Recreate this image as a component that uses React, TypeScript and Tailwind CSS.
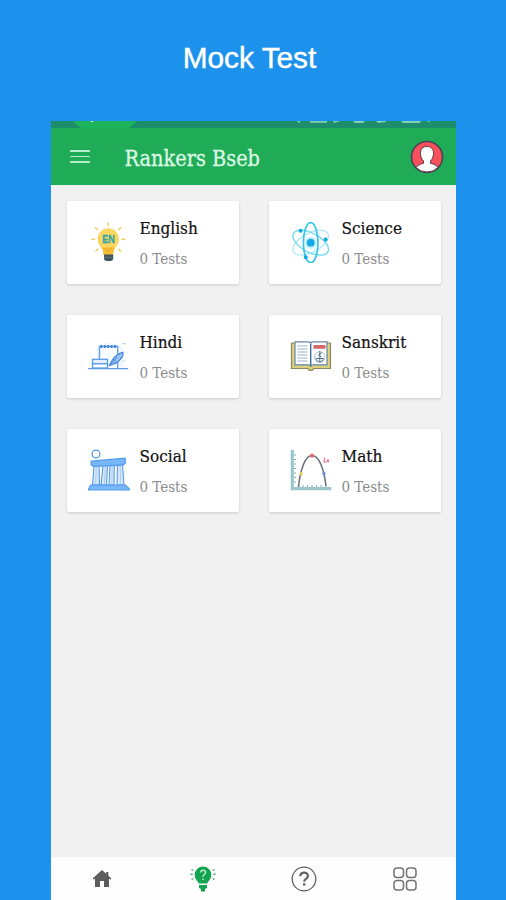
import type { ReactNode } from 'react';

const EnglishIcon = () => (
  <svg width="42" height="42" viewBox="0 0 42 42" fill="none">
    <g stroke="#f0cf68" strokeWidth="1.5" strokeLinecap="round">
      <path d="M20.3 2v2.4M7.5 6.5l2.2 2.2M33 6.5l-2.2 2.2M4 18.3h2.6M34 18.3h2.8M7.8 30l2.2-1.8M32.8 30l-2.2-1.8" />
    </g>
    <path d="M20.3 7.3a10.6 10.6 0 0 0-10.6 10.8c0 5 2.6 7.4 4.6 10.4.9 1.4 1 2.5 1.2 5.5h9.6c.2-3 .3-4.1 1.2-5.5 2-3 4.6-5.4 4.6-10.4A10.6 10.6 0 0 0 20.3 7.3z" fill="#fbd55e" />
    <path d="M13.5 26.5h13.6c-1.6 2.2-1.9 4-2 7.5h-9.6c-.1-3.5-.4-5.3-2-7.5z" fill="#f7bf38" />
    <path d="M17 27l3.3 3 3.3-3" stroke="#e59b24" strokeWidth="1" />
    <path d="M16 33.5h9.2v4.1a2.5 2.5 0 0 1-2.5 2.4h-4.2a2.5 2.5 0 0 1-2.5-2.4z" fill="#3c5360" />
    <path d="M16 36.3h9.2" stroke="#78858b" strokeWidth=".7" />
    <text x="20.4" y="22" textAnchor="middle" fontSize="10" fontWeight="700" fill="#2fa4a8" stroke="#2fa4a8" strokeWidth=".3" fontFamily="Liberation Sans, sans-serif" textLength="12.5" lengthAdjust="spacingAndGlyphs">EN</text>
  </svg>
);

const ScienceIcon = () => (
  <svg width="42" height="42" viewBox="0 0 42 42" fill="none">
    <ellipse cx="20.7" cy="21.7" rx="19.5" ry="9.5" transform="rotate(-28 20.7 21.7)" stroke="#b5eafa" strokeWidth="1.4" />
    <ellipse cx="20.7" cy="21.7" rx="19.5" ry="9.5" transform="rotate(28 20.7 21.7)" stroke="#7bdaf2" strokeWidth="1.5" />
    <ellipse cx="20.7" cy="21.7" rx="7.3" ry="20" stroke="#35c4ec" strokeWidth="1.7" />
    <circle cx="20.7" cy="21.7" r="6" fill="#c6f0fc" />
    <circle cx="20.7" cy="21.7" r="3.9" fill="#16a9ea" />
    <circle cx="10.6" cy="9.7" r="2" fill="#16a9e0" />
    <circle cx="35.6" cy="18.4" r="2" fill="#16a9e0" />
    <circle cx="15.7" cy="36.2" r="2" fill="#16a9e0" />
  </svg>
);

const HindiIcon = () => (
  <svg width="42" height="42" viewBox="0 0 42 42" fill="none" stroke="#5b9be8" strokeLinecap="round">
    <path d="M8 12c4-4 18-5 24-2s5 15 2 22H10z" fill="#f3f7fe" stroke="none" />
    <path d="M11.5 24V11.5h18.2V33" fill="#f8fbff" strokeWidth="1.3" />
    <path d="M12.5 11.5h16.5" strokeWidth="3" strokeDasharray="1.8 1.6" strokeLinecap="butt" stroke="#3e83d8" />
    <rect x="4.5" y="24.3" width="15" height="4.5" fill="#e3effd" strokeWidth="1.3" />
    <rect x="4.5" y="28.8" width="15" height="4.2" fill="#fff" strokeWidth="1.3" />
    <path d="M.7 33.6h39" strokeWidth="1.4" />
    <path d="M21.5 30.3l3-5.5c2.5-3.5 6-6.5 10.5-7.5.5 4-2.5 7.5-6 10.3z" fill="#9ec4f2" strokeWidth="1.2" stroke="#4187dc" />
    <path d="M21.5 30.3l7.5-8M25.5 24.5l2.7 3" strokeWidth="1" stroke="#4187dc" />
    <path d="M34.5 8.7h3M35 25.5l1.5 1.5" strokeWidth=".8" stroke="#9bbce6" />
  </svg>
);

const SanskritIcon = () => (
  <svg width="42" height="42" viewBox="0 0 42 42" fill="none">
    <path d="M1.5 8h39v25.5H24l-1.7 1.8h-3L17.7 33.5H1.500z" fill="#dccf7d" stroke="#8b8863" strokeWidth="1.2" strokeLinejoin="round" />
    <path d="M5 6.8h13c1.600 0 2.700.6 2.700 1.600 0-1 1.100-1.600 2.700-1.600H37v23H23.400c-1.600 0-2.700.6-2.700 1.600 0-1-1.100-1.600-2.700-1.600H5z" fill="#fbfdff" stroke="#6687a5" strokeWidth="1.200" />
    <path d="M20.700 8.500v23" stroke="#456e98" strokeWidth="1.400" />
    <path d="M7.500 11h10M7.500 14h10M7.500 17h10M7.500 20h10M7.500 23h10M7.500 26h10" stroke="#a2b4c1" strokeWidth="1.100" />
    <path d="M23.500 10h12v3.800h-12z" fill="#d46b68" />
    <circle cx="29.700" cy="22" r="5.300" stroke="#a9b7c4" strokeWidth=".8" />
    <path d="M26 23c0 5 7 5 7.400.5h-7.400M29.800 16v11M32 17.500l-3.500 2.500 3 2" stroke="#57738e" strokeWidth="1" />
  </svg>
);

const SocialIcon = () => (
  <svg width="42" height="42" viewBox="0 0 42 42" fill="none" stroke="#569bea" strokeLinejoin="round">
    <circle cx="8" cy="5" r="3.9" strokeWidth="1.3" fill="#fff" />
    <path d="M6 16.5L4.5 36h7l-.5-20zM15 16.5L13 36h5.5l1-20zM22 16l-1 20h5l.3-20.500zM29.500 15.500L29 36h7l-1.500-20.500z" fill="#d7e8fc" strokeWidth="1.100" />
    <path d="M8.500 17l-1 19M17.500 17l-1.300 19M24.200 16l-.5 20M32.200 16l.4 20" strokeWidth=".6" stroke="#8dbdf4" />
    <path d="M3.200 12.200l34-3v5.100l-2.200 1.700-29 1.400-2.800-1.500z" fill="#78b7fb" strokeWidth="1.300" />
    <path d="M2.500 36.200h35l3.700 3.500v1.300H.6v-1.300z" fill="#78b7fb" strokeWidth="1.200" />
  </svg>
);

const MathIcon = () => (
  <svg width="42" height="42" viewBox="0 0 42 42" fill="none">
    <path d="M2.300 1v38.700h39" stroke="#9bc6ca" strokeWidth="3.200" />
    <path d="M4 6h2M4 10.500h2M4 15h2M4 19.500h2M4 24h2M4 28.500h2M4 33h2M13 38v-2M17.500 38v-2M22 38v-2M26.500 38v-2M31 38v-2" stroke="#7fafb4" strokeWidth="1" />
    <path d="M8.500 38C10.500 19 15.500 6.500 22 6.500S34 18.500 36 37.500" stroke="#68727b" strokeWidth="1.500" />
    <circle cx="22" cy="6.700" r="2.100" fill="#ed6873" />
    <circle cx="11.200" cy="24.700" r="1.700" fill="#f3d25d" />
    <circle cx="34" cy="24.700" r="1.700" fill="#6c8fe0" />
    <path d="M34.500 8.500l-.5 4.500h2.500M36.500 10.500l2.500 2.700M39 10.700l-2 2.500" stroke="#e8738b" strokeWidth="1.100" />
  </svg>
);

const subjects: { name: string; icon: ReactNode }[] = [
  { name: 'English', icon: <EnglishIcon /> },
  { name: 'Science', icon: <ScienceIcon /> },
  { name: 'Hindi', icon: <HindiIcon /> },
  { name: 'Sanskrit', icon: <SanskritIcon /> },
  { name: 'Social', icon: <SocialIcon /> },
  { name: 'Math', icon: <MathIcon /> },
];

const StatusBar = () => (
  <svg width="405" height="7" viewBox="0 0 405 7" className="block shrink-0 bg-[#1c8e6b]">
    <path d="M22 0h64c-4 5-8 8-14 8H36c-6 0-10-3-14-8z" fill="#1db35c" />
    <path d="M39 0h4l-2 1.200z" fill="#d8f5e3" />
    <path d="M246 0h3v1.500h-2zM259 0h17v1.800h-17zM282 0h7l-4 1.500h-3zM302 0h12l-2 2h-8zM325 0h10v1l-8 1zM350 0h20l-1 2h-17zM377 0h2v1h-2z" fill="#83cfb9" />
  </svg>
);

const TopBar = () => (
  <header className="flex h-[57px] shrink-0 items-center bg-[#20ab57] pr-[12px] pl-[19px]">
    <button aria-label="Menu" className="flex w-[20px] flex-col gap-[4px]">
      <span className="h-[1.5px] w-full bg-[#b4edc8]" />
      <span className="h-[1.5px] w-full bg-[#b4edc8]" />
      <span className="h-[1.5px] w-full bg-[#b4edc8]" />
    </button>
    <h2 className="ml-[35px] pt-[4px] text-[21.5px] leading-[28px] whitespace-nowrap text-[#dcf8e4] [-webkit-text-stroke:0.3px_#dcf8e4]">Rankers Bseb</h2>
    <svg width="34" height="34" viewBox="0 0 34 34" className="ml-auto">
      <circle cx="17" cy="17" r="15.5" fill="#f9505e" stroke="#464251" strokeWidth="1.6" />
      <path d="M17 6.500c-4.500 0-6.500 2.600-6.500 6.800 0 3.500 1.300 6 3 7.700v2.300c-3.500.7-6 2-7.500 4.200A15 15 0 0 0 17 32a15 15 0 0 0 11-4.500c-1.500-2.200-4-3.500-7.500-4.200V21c1.700-1.700 3-4.200 3-7.700 0-4.200-2-6.800-6.500-6.800z" fill="#fff" stroke="#5b3945" strokeWidth="1" />
    </svg>
  </header>
);

const BottomNav = () => (
  <nav className="grid h-[43px] shrink-0 grid-cols-4 items-center justify-items-center bg-[#fefefe] pl-px">
    <svg width="20" height="20" viewBox="0 0 20 20" fill="#5c5c5c">
      <path d="M10 1L.6 9.500 1.700 10.700 3 9.600V18h5v-6h4v6h5V9.600l1.300 1.100 1.100-1.200-3-2.700V3h-2.200v1.800z" />
    </svg>
    <svg width="28" height="28" viewBox="0 0 28 28" fill="none">
      <path d="M14 1.500a8.300 8.300 0 0 0-8.300 8.300c0 4.200 2.500 5.500 4 8.700h8.600c1.500-3.200 4-4.500 4-8.700A8.300 8.300 0 0 0 14 1.500z" fill="#12a451" />
      <path d="M10 20h8v3l-2 1v2.500h-4V24l-2-1z" fill="#12a451" />
      <path d="M11.700 7.500c.2-3 4.800-2.800 4.800 0 0 2-2.500 2-2.500 4.200M14 13.500v1.500" stroke="#bde9cc" strokeWidth="1.500" />
      <path d="M1.500 9.300h2.200M24.300 9.300h2.200M2.500 4.500l1.800 1M25.500 4.500l-1.800 1M2.500 14.500l1.800-1M25.500 14.500l-1.800-1" stroke="#48aa71" strokeWidth="1.400" />
    </svg>
    <svg width="28" height="28" viewBox="0 0 28 28" fill="none" stroke="#626262">
      <circle cx="14" cy="14" r="11.800" strokeWidth="1.300" />
      <path d="M10.300 11.300c.2-5 7.600-4.800 7.600-.4 0 2.800-3.700 2.900-3.700 5.800" strokeWidth="2.200" />
      <path d="M14.200 18.300v2.300" strokeWidth="2.400" />
    </svg>
    <svg width="26" height="26" viewBox="0 0 26 26" fill="none" stroke="#747474" strokeWidth="1.500">
      <path d="M5 2h3.500a3 3 0 0 1 3 3v3.500a3 3 0 0 1-3 3H5a3 3 0 0 1-3-3V5a3 3 0 0 1 3-3zM17.500 2H21a3 3 0 0 1 3 3v3.500a3 3 0 0 1-3 3h-3.500a3 3 0 0 1-3-3V5a3 3 0 0 1 3-3zM5 14.500h3.500a3 3 0 0 1 3 3V21a3 3 0 0 1-3 3H5a3 3 0 0 1-3-3v-3.500a3 3 0 0 1 3-3zM17.500 14.500H21a3 3 0 0 1 3 3V21a3 3 0 0 1-3 3h-3.500a3 3 0 0 1-3-3v-3.500a3 3 0 0 1 3-3z" />
    </svg>
  </nav>
);

export default function App() {
  return (
    <div className="flex h-[900px] w-[506px] flex-col items-center overflow-hidden bg-[#1d92ec]">
      <div className="flex h-[121px] shrink-0 items-start pt-[40px] pr-[7px]">
        <h1 className="font-['Liberation_Sans',sans-serif] text-[29.8px] leading-[36px] text-white [-webkit-text-stroke:0.4px_white]">Mock Test</h1>
      </div>

      <div className="flex w-[405px] flex-1 flex-col bg-[#f1f1f1] font-['DejaVu_Serif_Condensed','DejaVu_Serif',serif]">
        <StatusBar />
        <TopBar />

        <main className="grid flex-1 grid-cols-2 content-start gap-x-[30px] gap-y-[31px] pt-[16px] pr-[15px] pl-[16px]">
          {subjects.map((subject) => (
            <div key={subject.name} className="flex h-[83px] items-start rounded-[2px] bg-white pt-[20px] pl-[21px] shadow-[0_1px_3px_rgba(0,0,0,0.16)]">
              <div className="shrink-0">{subject.icon}</div>
              <div className="ml-[10px] -mt-[5px] whitespace-nowrap">
                <h3 className="text-[17px] leading-[24px] text-[#111111] [-webkit-text-stroke:0.2px_#111111]">{subject.name}</h3>
                <p className="mt-[8px] text-[15px] leading-[22px] text-[#8b8b8b]">0 Tests</p>
              </div>
            </div>
          ))}
        </main>

        <BottomNav />
      </div>
    </div>
  );
}
